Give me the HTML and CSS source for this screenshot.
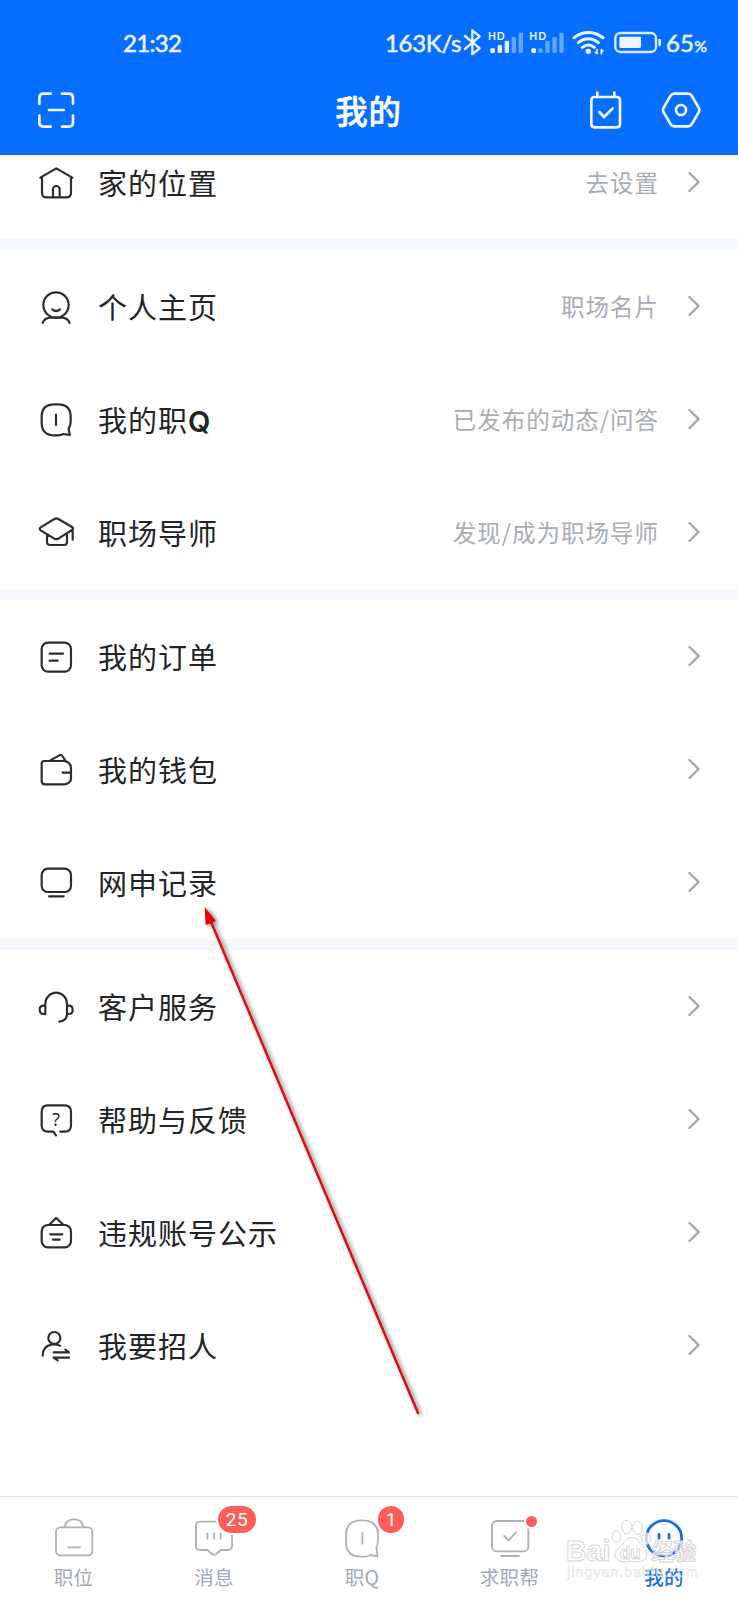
FILE: index.html
```html
<!DOCTYPE html>
<html lang="zh-CN">
<head>
<meta charset="utf-8">
<title>我的</title>
<link rel="stylesheet" href="styles.css">
</head>
<body>
<div class="screen">
  <header class="header">
    <div class="status">
      <span class="status-time">21:32</span>
      <div class="status-right">
        <span class="status-speed">163K/s</span>
        <svg class="status-icons" viewBox="276 78 612 99">
          <path class="bt" d="M291 108L335 145L313 162V91L335 109L291 147"/>
          <text class="hd" x="360" y="119" textLength="50">HD</text>
          <text class="hd" x="484" y="119" textLength="50">HD</text>
          <g fill="#eaf5ff">
            <rect x="367" y="145" width="14" height="14" rx="4"/><rect x="389" y="135" width="13" height="24" rx="4"/><rect x="410" y="122" width="13" height="37" rx="4"/>
            <rect x="490" y="145" width="14" height="14" rx="4"/>
          </g>
          <g fill="#62a8ff">
            <rect x="431" y="111" width="13" height="48" rx="4"/><rect x="452" y="98" width="13" height="61" rx="4"/>
            <rect x="511" y="145" width="13" height="14" rx="4"/><rect x="532" y="122" width="13" height="37" rx="4"/><rect x="553" y="111" width="13" height="48" rx="4"/><rect x="574" y="98" width="13" height="61" rx="4"/>
          </g>
          <g class="wifi"><path d="M618 113Q661 82 705 113M631 128Q661 105 691 128M643 142Q661 128 679 142"/></g>
          <circle cx="661" cy="154" r="8" fill="#eaf5ff"/>
          <path class="thin" d="M682 157l5 4V149M705 153l-5-4v12"/>
          <rect x="742" y="99" width="122" height="57" rx="15" class="batt"/>
          <rect x="754" y="110" width="65" height="34" rx="4" fill="#eaf5ff"/>
          <rect x="871" y="117" width="8" height="21" rx="3" fill="#eaf5ff"/>
        </svg>
        <span class="status-batt">65<small>%</small></span>
      </div>
    </div>
    <div class="navbar">
      <svg class="nav-icon scan" viewBox="109 268 120 120"><path d="M119 310V292Q119 279 132 279H153M187 279H207Q220 279 220 292V310M119 345V365Q119 378 132 378H153M187 378H207Q220 378 220 365V345M148 328H192"/></svg>
      <h1 class="title">我的</h1>
      <svg class="nav-icon cal" viewBox="654 268 120 120"><path d="M680 289H746Q756 289 756 299V370Q756 380 746 380H680Q670 380 670 370V299Q670 289 680 289ZM688 276V289M739 276V289M694 334L708 349L734 323"/></svg>
      <svg class="nav-icon gear" viewBox="880 268 120 120"><path d="M920 279H961Q968 279 972 285L993 321Q997 328 993 335L972 371Q968 377 961 377H920Q913 377 909 371L888 335Q884 328 888 321L909 285Q913 279 920 279Z"/><circle cx="940" cy="328" r="15"/></svg>
    </div>
  </header>

  <main class="list">
    <section class="group">
      <a class="row"><svg class="icon" viewBox="0 0 120 120"><path d="M13 44L61 16L109 44M18 42V89Q18 103 32 103H91Q105 103 105 89V42M51 103V79A10 10 0 0 1 71 79V103"/></svg><span class="label">家的位置</span><span class="hint">去设置</span><svg class="chev" viewBox="0 0 12 22"><path d="M1.500 2L10.500 11L1.500 20"/></svg></a>
    </section>
    <section class="group">
      <a class="row"><svg class="icon" viewBox="0 0 120 120"><circle cx="60" cy="54" r="38"/><path d="M49 67Q60 77 72 67M20 108Q25 92 45 92H76Q95 92 101 108"/></svg><span class="label">个人主页</span><span class="hint">职场名片</span><svg class="chev" viewBox="0 0 12 22"><path d="M1.500 2L10.500 11L1.500 20"/></svg></a>
      <a class="row"><svg class="icon" viewBox="0 0 120 120"><path d="M101 105L98 84Q104 77 104 62V50Q104 13 65 13H56Q17 13 17 50V68Q17 106 56 106H65Q75 106 82 102ZM60 44V75"/></svg><span class="label">我的职<b>Q</b></span><span class="hint">已发布的动态/问答</span><svg class="chev" viewBox="0 0 12 22"><path d="M1.500 2L10.500 11L1.500 20"/></svg></a>
      <a class="row"><svg class="icon" viewBox="0 0 120 120"><path d="M14 43L55 18Q61 14 67 18L108 42Q114 46 108 51L67 77Q61 80 55 77L14 52Q8 47 14 43ZM33 66V87Q33 96 42 96H84Q93 96 93 87V66M110 47V80"/></svg><span class="label">职场导师</span><span class="hint">发现/成为职场导师</span><svg class="chev" viewBox="0 0 12 22"><path d="M1.500 2L10.500 11L1.500 20"/></svg></a>
    </section>
    <section class="group">
      <a class="row"><svg class="icon" viewBox="0 0 120 120"><rect x="17" y="17" width="88" height="87" rx="19"/><path d="M41 50H81M41 71H65"/></svg><span class="label">我的订单</span><svg class="chev" viewBox="0 0 12 22"><path d="M1.500 2L10.500 11L1.500 20"/></svg></a>
      <a class="row"><svg class="icon" viewBox="0 0 120 120"><path d="M25 33H85Q105 37 105 55V84Q105 99 87 103H27Q17 103 17 93V41Q17 33 25 33ZM42 32L70 16Q76 13 79 18L88 32M80 68H105"/></svg><span class="label">我的钱包</span><svg class="chev" viewBox="0 0 12 22"><path d="M1.500 2L10.500 11L1.500 20"/></svg></a>
      <a class="row"><svg class="icon" viewBox="0 0 120 120"><rect x="17" y="17" width="88" height="70" rx="19"/><path d="M39 100H83"/></svg><span class="label">网申记录</span><svg class="chev" viewBox="0 0 12 22"><path d="M1.500 2L10.500 11L1.500 20"/></svg></a>
    </section>
    <section class="group">
      <a class="row"><svg class="icon" viewBox="0 0 120 120"><path d="M28 82V50A32.500 33 0 0 1 93 50V80Q93 101 70 104M28 56H23Q11 56 11 69Q11 81 23 81H28M93 56H98Q110 56 110 69Q110 81 98 81H93"/></svg><span class="label">客户服务</span><svg class="chev" viewBox="0 0 12 22"><path d="M1.500 2L10.500 11L1.500 20"/></svg></a>
      <a class="row"><svg class="icon" viewBox="0 0 120 120"><path d="M60 106L52 95H36Q17 95 17 76V35Q17 16 36 16H86Q105 16 105 35V76Q105 95 86 95H73"/><text class="qmark" x="60" y="79">?</text></svg><span class="label">帮助与反馈</span><svg class="chev" viewBox="0 0 12 22"><path d="M1.500 2L10.500 11L1.500 20"/></svg></a>
      <a class="row"><svg class="icon" viewBox="0 0 120 120"><rect x="17" y="36" width="88" height="67" rx="19"/><path d="M40 35L57 18Q60 13 64 18L82 35M43 64H79M51 80H71"/></svg><span class="label">违规账号公示</span><svg class="chev" viewBox="0 0 12 22"><path d="M1.500 2L10.500 11L1.500 20"/></svg></a>
      <a class="row"><svg class="icon" viewBox="0 0 120 120"><circle cx="55" cy="36" r="18"/><path d="M20 89Q20 61 46 56Q60 54 72 59M53 79H99L88 71M99 95H53L65 103"/></svg><span class="label">我要招人</span><svg class="chev" viewBox="0 0 12 22"><path d="M1.500 2L10.500 11L1.500 20"/></svg></a>
    </section>
  </main>

  <nav class="tabs">
    <a class="tab"><svg class="tab-icon" viewBox="131 114 180 120"><rect x="167" y="142" width="109" height="84" rx="13"/><path d="M193 141Q197 118 221 118Q245 118 249 141M203 202H239"/></svg><span>职位</span></a>
    <a class="tab"><svg class="tab-icon" viewBox="553 114 180 120"><path d="M602 125H684Q697 125 697 138V198Q697 210 684 210H664L649 222Q643 227 637 222L623 210H602Q589 210 589 198V138Q589 125 602 125ZM623 160V176M643 160V176M663 160V176"/></svg><span>消息</span><i class="badge pill">25</i></a>
    <a class="tab"><svg class="tab-icon" viewBox="996 114 180 120"><path d="M1133 229L1129 204Q1134 192 1134 178V165Q1134 121 1089 121H1083Q1038 121 1038 165V186Q1038 230 1083 230H1093Q1104 230 1112 225ZM1087 159V191"/></svg><span>职Q</span><i class="badge round">1</i></a>
    <a class="tab"><svg class="tab-icon" viewBox="335 114 180 120"><rect x="371" y="123" width="109" height="91" rx="14"/><path d="M399 228H452M408 168L421 181L443 157"/></svg><span>求职帮</span><i class="dot"></i></a>
    <a class="tab active"><svg class="tab-icon" viewBox="799 114 180 120"><circle cx="889" cy="175" r="53"/><path d="M874 163V175M904 163V175"/></svg><span>我的</span></a>
  </nav>

  <svg class="watermark" viewBox="590 115 405 195">
    <g class="wm-shape">
      <ellipse cx="744" cy="171" rx="13" ry="18"/><ellipse cx="775" cy="142" rx="15" ry="20"/><ellipse cx="808" cy="144" rx="15" ry="20"/><ellipse cx="833" cy="177" rx="14" ry="18"/>
      <path d="M790 173Q805 173 814 190Q836 209 836 223Q834 248 806 246Q790 243 775 246Q742 249 740 225Q740 211 763 194Q775 173 790 173Z"/>
      <text class="wm-big" x="593" y="245" textLength="133" lengthAdjust="spacingAndGlyphs">Bai</text>
      <text class="wm-du" x="755" y="237" textLength="62" lengthAdjust="spacingAndGlyphs">du</text>
      <text class="wm-cn" x="849" y="240" textLength="135">经验</text>
    </g>
    <text class="wm-url" x="597" y="293" textLength="391">jingyan.baidu.com</text>
  </svg>

  <svg class="arrow" viewBox="190 895 245 535">
    <g><path d="M209 917L418 1413" stroke="#df0a10" stroke-width="2.400" stroke-linecap="round"/><path d="M204.700 907L215.700 921L205.700 925Z" fill="#e60000"/></g>
  </svg>
</div>
</body>
</html>
```
FILE: styles.css
```css
* { box-sizing: border-box; }
body { margin: 0; font-family: "Noto Sans CJK SC", sans-serif; }
.screen {
  position: relative; width: 738px; height: 1600px; overflow: hidden;
  display: flex; flex-direction: column; background: #fff; color: #222426;
}
svg { display: block; flex: none; }

.header { flex: none; height: 154.500px; background: #086eff; color: #fff; z-index: 1; }
.status {
  height: 68px; padding: 17px 31px 0 123px; display: flex;
  justify-content: space-between; align-items: center;
  font-family: Lato, sans-serif; font-weight: 400; color: #eaf5ff;
}
.status-time, .status-speed, .status-batt { font-size: 24px; line-height: 30px; white-space: nowrap; letter-spacing: -.7px; -webkit-text-stroke: .5px #eaf5ff; }
.status-right { display: flex; align-items: center; }
.status-speed { width: 75px; letter-spacing: -.3px; }
.status-icons { width: 204px; height: 33px; fill: none; stroke-linecap: round; stroke-linejoin: round; }
.status-batt { width: 41px; margin-left: 2px; letter-spacing: .2px; }
.status-batt small { font-size: 16px; letter-spacing: 0; line-height: 1; }
.bt { stroke: #eaf5ff; stroke-width: 7; }
.hd { fill: #eaf5ff; font: 700 31px Lato, sans-serif; }
.wifi path { stroke: #eaf5ff; stroke-width: 9; }
.thin { stroke: #eaf5ff; stroke-width: 5; }
.batt { stroke: #d9ecff; stroke-width: 7; }

.navbar { height: 83px; display: flex; align-items: center; padding: 0 37px 0 36px; }
.nav-icon { width: 40px; height: 40px; fill: none; stroke: #f2f9ff; stroke-width: 8; stroke-linecap: round; stroke-linejoin: round; }
.title { flex: 1; margin: 0 -10px 0 0; padding-left: 65px; text-align: center; font-size: 32.500px; font-weight: 500; line-height: 40px; letter-spacing: .8px; -webkit-text-stroke: .5px #fff; }
.cal { margin-right: 35px; }

.list { flex: 1; min-height: 0; margin-top: -28.500px; }
.group + .group { border-top: 11px solid #f4f7fb; }
.row { display: flex; align-items: center; height: 113px; padding: 0 38px 0 36px; }
.icon { width: 40px; height: 40px; fill: none; stroke: #2a2c2e; stroke-width: 6.500; stroke-linecap: round; stroke-linejoin: round; }
.qmark { font: 400 53px "Noto Sans", sans-serif; text-anchor: middle; fill: #2a2c2e; stroke: none; }
.label { flex: 1; padding-left: 22px; font-size: 29px; letter-spacing: 1px; line-height: 40px; margin-top: -2px; }
.label b { font: 600 29px Inter, sans-serif; }
.hint { font-size: 23.500px; letter-spacing: 1px; color: #a9adb3; line-height: 34px; margin: -1px 29px 0 0; }
.chev { width: 12px; height: 22px; fill: none; stroke: #a4a7ac; stroke-width: 2.300; stroke-linecap: round; margin-top: -2px; }

.tabs {
  flex: none; height: 104px; border-top: 1px solid #e3e4e6; background: #fff;
  padding: 21px 0 0 43.500px; display: grid; grid-template-columns: 140.500px 148px 147.500px 154.500px 60px;
  justify-items: start; align-items: start;
}
.tab { position: relative; width: 60px; display: flex; flex-direction: column; align-items: center; font-size: 19.500px; letter-spacing: .3px; color: #a2a9b2; line-height: 28px; gap: 5px; white-space: nowrap; }
.tab-icon { width: 60px; height: 40px; fill: none; stroke: #adb2ba; stroke-width: 5.500; stroke-linecap: round; stroke-linejoin: round; }
.active { color: #1a6fe0; font-weight: 500; }
.active .tab-icon { stroke: #176fe2; stroke-width: 8.500; }
.badge { position: absolute; top: -12px; height: 27px; background: #fd5e56; color: #fff; font: 400 19px/27px Roboto, sans-serif; letter-spacing: 0; text-align: center; border-radius: 14px; box-shadow: 0 0 0 2px #fff; }
.pill { left: 34px; width: 38px; letter-spacing: .5px; }
.round { left: 46px; width: 26px; }
.dot { position: absolute; left: 46px; top: -2px; width: 11px; height: 11px; border-radius: 50%; background: #fd5e56; box-shadow: 0 0 0 2px #fff; }

.watermark { position: absolute; left: 564.700px; top: 1518.300px; width: 135px; height: 65px; }
.wm-shape { fill: rgba(255,255,255,.72); stroke: #d6d6d6; stroke-width: 3; }
.wm-big { font: 700 91px "Liberation Sans", sans-serif; }
.wm-du { font: 700 56px "Liberation Sans", sans-serif; }
.wm-cn { font: 700 68px "Noto Sans CJK SC", sans-serif; }
.wm-url { font: 400 42px "Liberation Sans", sans-serif; fill: rgba(255,255,255,.6); stroke: rgba(215,215,215,.75); stroke-width: 1.800; }

.arrow { position: absolute; left: 190px; top: 895px; width: 245px; height: 535px; fill: none; }
.arrow g { filter: drop-shadow(2px 1px 2px rgba(0,0,0,.6)); }
```
